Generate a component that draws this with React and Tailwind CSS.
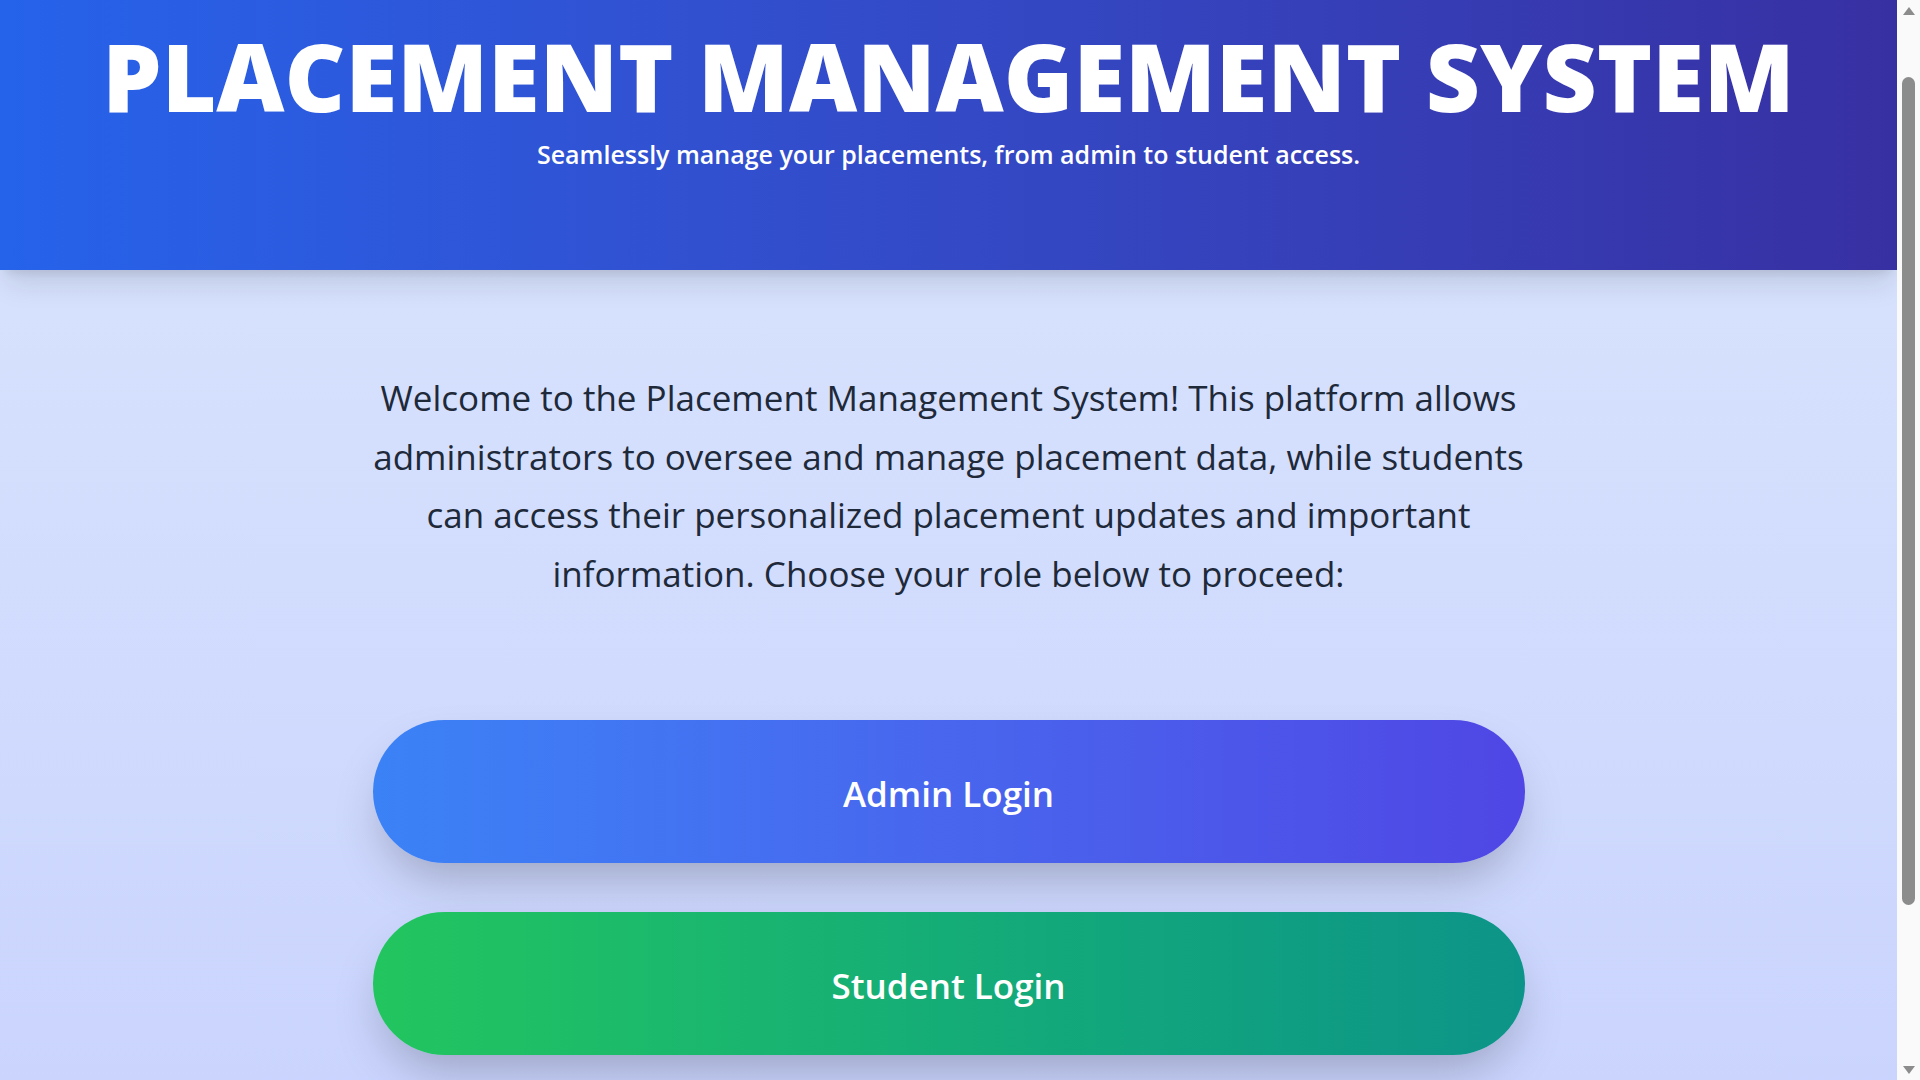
import React from "react"

const font = "font-['Open_Sans','Noto_Sans',sans-serif]"

const RoleButton = ({ label, colors }) => (
    <button className={`w-full h-[143px] pt-[5px] rounded-full bg-gradient-to-r ${colors} text-white text-[35px] font-semibold shadow-2xl cursor-pointer`}>
        {label}
    </button>
)

// browser scrollbar as it appears in the shot
const ScrollRail = () => (
    <div className="w-[23px] h-full shrink-0 bg-[#fafafa] flex flex-col items-center">
        <svg width="14" height="10" viewBox="0 0 14 10" className="mt-[6px] shrink-0">
            <path d="M7 1 L13 9 L1 9 Z" fill="#8c8c8c" />
        </svg>
        <div className="mt-[61px] w-[13px] h-[828px] rounded-full bg-[#8c8c8c]" />
        <div className="flex-1" />
        <svg width="14" height="10" viewBox="0 0 14 10" className="mb-[5px] shrink-0">
            <path d="M1 1 L13 1 L7 9 Z" fill="#8c8c8c" />
        </svg>
    </div>
)

const App = () => {
    return (
        <div className="h-screen flex overflow-hidden">
            <div className="flex-1 overflow-y-auto">
                <div className={`min-h-[1357px] bg-gradient-to-b from-[#dbe6fd] to-[#c6d0fe] ${font}`}>
                    <header className="h-[270px] bg-gradient-to-r from-[#2563eb] to-[#3730a3] shadow-xl pt-[20px] text-center text-white">
                        <h1 className="text-[94px] leading-[1.2] font-extrabold">PLACEMENT MANAGEMENT SYSTEM</h1>
                        <p className="mt-[4px] text-[25px] leading-[35px] font-semibold">Seamlessly manage your placements, from admin to student access.</p>
                    </header>

                    <main className="pt-[99px] pb-[300px]">
                        <p className="max-w-[1170px] mx-auto text-center text-[35px] leading-[58.5px] font-medium text-gray-800">
                            Welcome to the Placement Management System! This platform allows administrators to oversee and manage placement data, while students can access their personalized placement updates and important information. Choose your role below to proceed:
                        </p>

                        <div className="max-w-6xl mx-auto mt-[117px] flex flex-col gap-[49px]">
                            <RoleButton label="Admin Login" colors="from-[#3b82f6] to-[#4f46e5]" />
                            <RoleButton label="Student Login" colors="from-[#22c55e] to-[#0d9488]" />
                        </div>
                    </main>
                </div>
            </div>
            <ScrollRail />
        </div>
    )
}

export default App
